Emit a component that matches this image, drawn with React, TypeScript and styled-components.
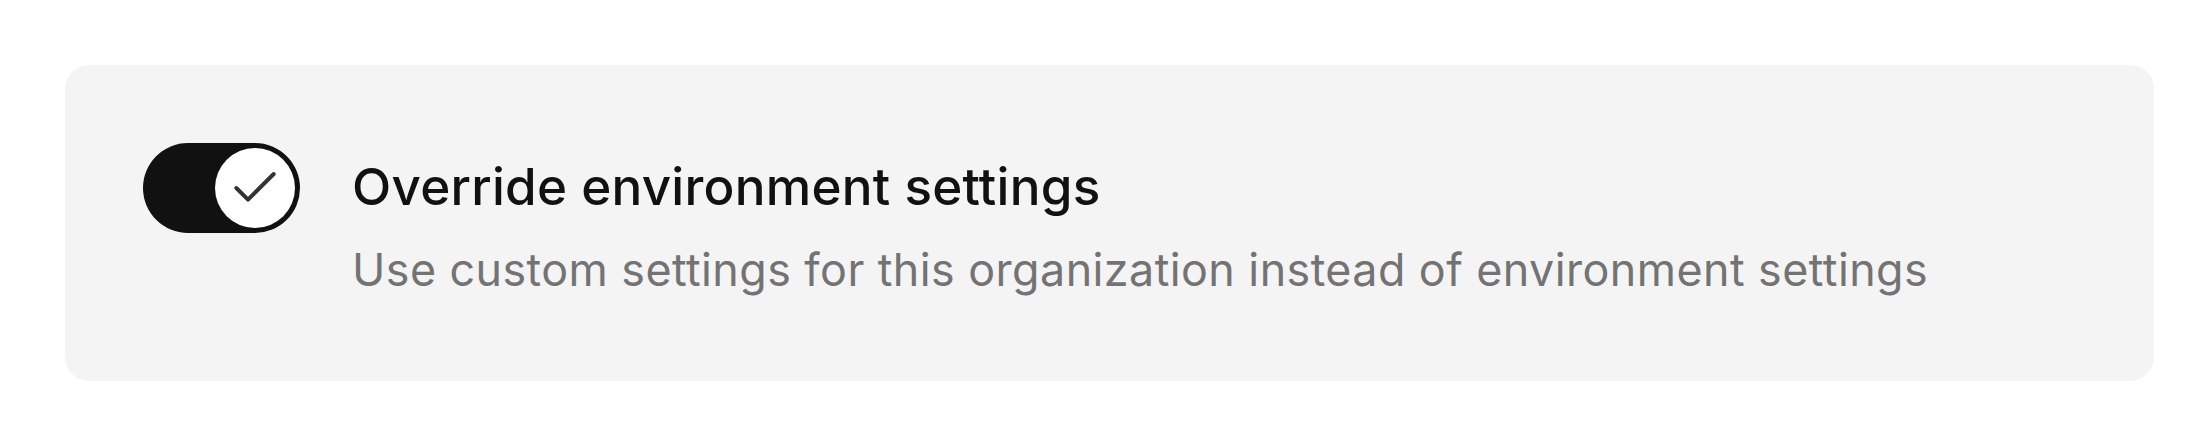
import React, { useState } from "react";
import styled, { createGlobalStyle } from "styled-components";

const GlobalStyle = createGlobalStyle`
  html, body {
    margin: 0;
    padding: 0;
    background: #ffffff;
    font-family: Inter, "Noto Sans", sans-serif;
  }
`;

const Page = styled.div`
  padding: 65px 46px 43px 65px;
`;

const Card = styled.div`
  display: flex;
  align-items: flex-start;
  gap: 52px;
  background: #f4f4f4;
  border-radius: 24px;
  padding: 78px 78px 79px 78px;
`;

const Track = styled.button<{ $on: boolean }>`
  flex: none;
  display: flex;
  align-items: center;
  justify-content: ${(p) => (p.$on ? "flex-end" : "flex-start")};
  width: 157px;
  height: 90px;
  padding: 0 5px;
  box-sizing: border-box;
  border: none;
  border-radius: 45px;
  background: ${(p) => (p.$on ? "#111111" : "#d4d4d4")};
  cursor: pointer;
`;

const Knob = styled.span`
  display: flex;
  align-items: center;
  justify-content: center;
  width: 80px;
  height: 80px;
  border-radius: 50%;
  background: #ffffff;
`;

const TextCol = styled.div`
  display: flex;
  flex-direction: column;
  margin-top: 11px;
`;

const Title = styled.div`
  font-size: 51.2px;
  line-height: 64px;
  font-weight: 500;
  color: #111111;
  letter-spacing: 0.25px;
`;

const Description = styled.div`
  margin-top: 20px;
  font-size: 44.8px;
  line-height: 64px;
  font-weight: 400;
  color: #737373;
  letter-spacing: 0.45px;
`;

const CheckIcon = () => (
  <svg width="56" height="56" viewBox="0 0 24 24" fill="none" stroke="#333333" strokeWidth={1.7} strokeLinecap="round" strokeLinejoin="round">
    <path d="M20 6 9 17l-5-5" />
  </svg>
);

export default function App() {
  const [on, setOn] = useState(true);
  return (
    <>
      <GlobalStyle />
      <Page>
        <Card>
          <Track $on={on} onClick={() => setOn(!on)} aria-pressed={on}>
            <Knob>{on && <CheckIcon />}</Knob>
          </Track>
          <TextCol>
            <Title>Override environment settings</Title>
            <Description>Use custom settings for this organization instead of environment settings</Description>
          </TextCol>
        </Card>
      </Page>
    </>
  );
}
